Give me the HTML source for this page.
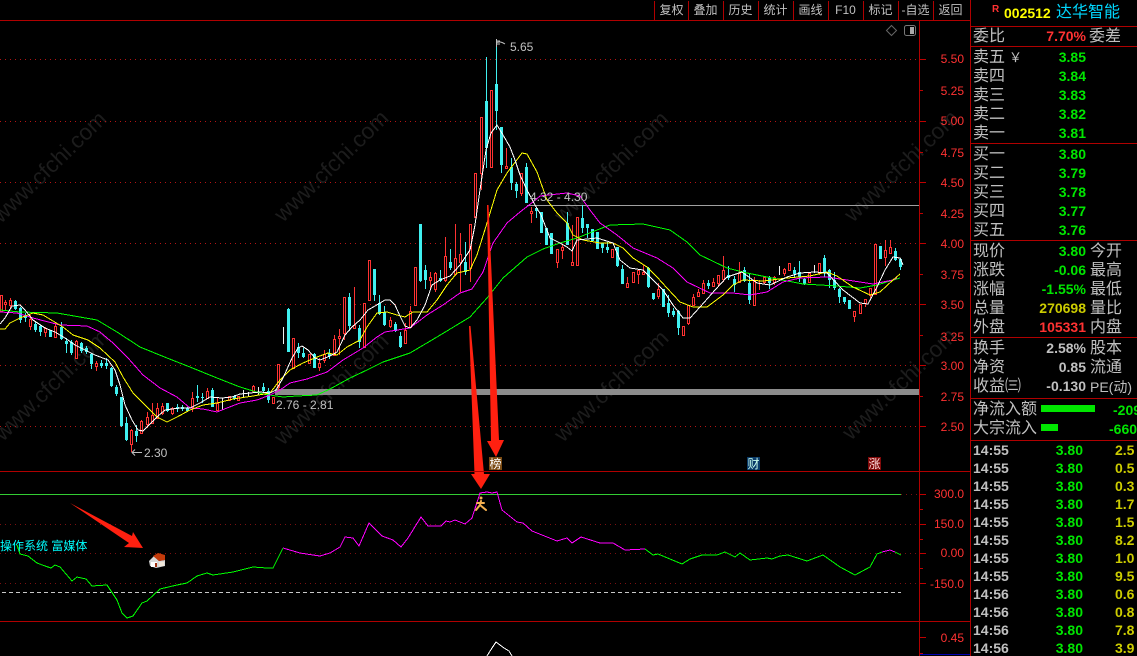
<!DOCTYPE html>
<html><head><meta charset="utf-8"><title>002512</title>
<style>
html,body{margin:0;padding:0;background:#000;width:1137px;height:656px;overflow:hidden}
#w{position:relative;width:1137px;height:656px;overflow:hidden;background:#000;font-family:"Liberation Sans","WenQuanYi Zen Hei",sans-serif}
svg{position:absolute;left:0;top:0}
.t{position:absolute;white-space:nowrap;line-height:18px;height:18px}
.l{font-size:16px;color:#c0c0c0;left:973px;margin-top:1px;font-family:"Liberation Sans","WenQuanYi Zen Hei",sans-serif}
.r{font-size:16px;color:#c0c0c0;left:1090px;margin-top:1px}
.v{font-size:14px;font-weight:bold;right:51px}
.g{color:#00e600}.y{color:#cccc00}.d{color:#ff3232}.s{color:#c0c0c0}
.a{font-size:12px;color:#ff3232;right:173px}
.b{font-size:12px;color:#c0c0c0;top:1px;text-align:center;width:35px}
.m{font-size:14px;font-weight:bold;color:#c0c0c0;left:973px}
.p{font-size:14px;font-weight:bold;color:#00e600;right:54px}
.q{font-size:14px;font-weight:bold;color:#cccc00;left:1115px}
.o{font-size:12px;color:#c0c0c0}
</style></head><body><div id="w">
<svg width="1137" height="656" viewBox="0 0 1137 656">
<g font-family="Liberation Sans" font-size="22.5" fill="#1c1c1c">
<text transform="translate(1,224) rotate(-44)">www.cfchi.com</text>
<text transform="translate(283,223) rotate(-44)">www.cfchi.com</text>
<text transform="translate(563,224) rotate(-44)">www.cfchi.com</text>
<text transform="translate(853,223) rotate(-44)">www.cfchi.com</text>
<text transform="translate(3,442) rotate(-44)">www.cfchi.com</text>
<text transform="translate(283,446) rotate(-44)">www.cfchi.com</text>
<text transform="translate(563,443) rotate(-44)">www.cfchi.com</text>
<text transform="translate(851,441) rotate(-44)">www.cfchi.com</text>
</g>
<g shape-rendering="crispEdges">
<g stroke="#b41414" stroke-dasharray="1 4" fill="none">
<path d="M0 59.5H920M0 121.5H920M0 182.5H920M0 243.5H920M0 304.5H920M0 365.5H920M0 426.5H920"/>
</g>
<g stroke="#7a1010" stroke-dasharray="1 4" fill="none">
<path d="M0 524.5H920M0 553.5H920M0 583.5H920M901 494.5H920"/>
</g>
<rect x="275" y="389" width="645" height="6" fill="#8c8c8c"/>
<path d="M527 205.5H920" stroke="#a0a0a0" fill="none"/>
<path d="M0 494.5H901" stroke="#33cc33" fill="none"/>
<path d="M2 592.5H901" stroke="#c8c8c8" stroke-dasharray="4 3" fill="none"/>
<g transform="translate(.5,0)" fill="none">
<path stroke="#40f0f0" d="M15 300V310M20 307V323M25 313V322M35 322V332M40 325V336M50 330V337M61 322V340M66 338V353M71 340V355M81 342V353M86 346V354M91 353V369M101 360V368M106 358V369M111 367V387M116 385V396M121 397V427M126 417V441M136 425V442M167 403V412M177 404V412M182 405V411M187 407V412M197 385V402M202 393V403M212 388V407M234 395V400M263 383V392M268 388V403M288 308V352M298 343V358M303 348V358M314 353V368M329 349V359M349 293V331M359 325V348M374 269V301M379 295V315M384 306V326M395 322V332M400 332V348M420 224V282M425 265V289M440 270V282M450 249V270M465 242V275M486 57V168M496 42V130M501 127V173M511 158V190M516 182V198M526 163V203M536 207V218M541 212V233M546 228V245M551 233V254M567 212V245M582 205V233M587 224V238M592 229V242M597 232V249M602 243V253M607 242V253M617 247V267M622 265V284M648 267V288M653 293V300M663 289V307M668 295V317M673 308V317M678 310V335M708 280V289M728 266V280M734 276V292M744 267V282M749 273V304M769 276V289M794 267V277M799 261V282M804 278V285M824 255V277M829 269V288M834 272V290M839 288V303M844 297V304M849 300V309M880 246V259M895 248V261M900 258V270"/>
<path stroke="#40f0f0" stroke-width="3" d="M15 301V309M20 308V320M25 315V318M35 324V330M40 326V332M50 330V337M61 327V339M66 341V344M71 342V353M81 343V351M86 348V352M91 354V364M101 363V366M106 363V366M111 368V386M116 387V394M121 397V426M126 423V440M136 431V436M167 403V411M177 407V409M182 407V409M187 408V411M197 396V398M202 397V398M212 390V407M234 396V399M263 387V391M268 391V400M288 309V352M298 347V353M303 353V357M314 354V368M329 353V356M349 297V326M359 328V342M374 269V295M379 303V314M384 312V325M395 324V331M400 336V347M420 224V281M425 270V280M440 278V281M450 262V268M465 262V272M486 101V148M496 84V111M501 127V165M511 167V183M516 184V191M526 167V203M536 208V211M541 212V233M546 228V245M551 233V254M567 223V245M582 218V228M587 224V228M592 229V241M597 232V249M602 243V248M607 247V250M617 247V266M622 269V284M648 268V287M653 293V299M663 289V307M668 303V313M673 311V315M678 311V328M708 283V286M728 275V278M734 279V285M744 270V281M749 283V300M769 277V283M794 270V274M799 272V277M804 279V284M824 258V272M829 270V280M834 280V288M839 289V297M844 297V302M849 300V309M880 246V259M895 251V260M900 259V267"/>
<path stroke="#f0f0f0" d="M222 398V410M243 390V397M248 392V397M258 387V395M283 327V344M779 266V275M814 265V273"/>
<path stroke="#ff3232" d="M1 295V311M5 300V310M10 298V308M30 315V330M45 327V337M55 322V338M76 340V358M96 361V371M131 429V452M141 420V433M147 412V428M152 403V423M157 403V419M162 403V415M172 407V415M192 392V412M207 388V398M217 398V410M229 396V400M238 396V400M253 385V392M273 397V403M278 364V390M293 338V368M309 354V363M319 358V371M324 350V363M334 335V355M339 329V355M344 297V340M354 287V328M364 303V347M369 260V300M390 317V328M405 323V344M410 306V328M415 267V306M430 272V290M435 272V292M445 237V282M455 224V274M460 233V292M470 224V282M475 173V217M481 117V190M491 90V167M506 148V168M521 173V196M531 207V223M557 249V268M562 245V259M572 225V265M577 217V265M612 249V257M627 277V288M633 272V283M638 270V284M643 265V274M658 283V299M683 326V336M688 305V325M693 294V305M698 289V297M703 280V293M713 278V287M718 275V287M723 256V282M739 262V283M754 277V306M759 280V290M764 276V284M774 276V285M784 268V276M789 263V271M809 272V283M819 263V275M854 311V322M860 304V313M865 299V307M870 288V298M875 244V294M885 240V266M890 240V254"/>
</g>
<g transform="translate(.5,.5)" fill="#000" stroke="#ff3232">
<path d="M0 295h2V311h-2zM4 302h2V304h-2zM9 300h2V305h-2zM29 319h2V326h-2zM44 328h2V332h-2zM54 326h2V337h-2zM75 341h2V358h-2zM95 363h2V366h-2zM130 430h2V444h-2zM140 421h2V433h-2zM146 417h2V424h-2zM151 415h2V423h-2zM156 408h2V418h-2zM161 406h2V413h-2zM171 408h2V413h-2zM191 398h2V407h-2zM206 391h2V398h-2zM216 403h2V410h-2zM228 396h2V400h-2zM237 396h2V400h-2zM252 386h2V391h-2zM272 397h2V403h-2zM277 364h2V387h-2zM292 338h2V368h-2zM308 354h2V363h-2zM318 363h2V367h-2zM323 354h2V360h-2zM333 339h2V355h-2zM338 336h2V338h-2zM343 297h2V333h-2zM353 325h2V328h-2zM363 303h2V347h-2zM368 260h2V300h-2zM389 320h2V326h-2zM404 330h2V343h-2zM409 311h2V327h-2zM414 267h2V305h-2zM429 277h2V280h-2zM434 273h2V289h-2zM444 256h2V280h-2zM454 258h2V274h-2zM459 254h2V262h-2zM469 224h2V268h-2zM474 173h2V217h-2zM480 117h2V173h-2zM490 90h2V167h-2zM505 166h2V168h-2zM520 173h2V193h-2zM530 211h2V213h-2zM556 249h2V262h-2zM561 247h2V250h-2zM571 262h2V265h-2zM576 217h2V265h-2zM611 249h2V257h-2zM626 283h2V287h-2zM632 272h2V282h-2zM637 270h2V274h-2zM642 272h2V274h-2zM657 289h2V296h-2zM682 326h2V335h-2zM687 305h2V323h-2zM692 297h2V305h-2zM697 292h2V296h-2zM702 283h2V293h-2zM712 282h2V286h-2zM717 275h2V283h-2zM722 270h2V279h-2zM738 273h2V282h-2zM753 281h2V305h-2zM763 277h2V282h-2zM773 277h2V282h-2zM783 269h2V273h-2zM788 263h2V270h-2zM808 273h2V282h-2zM818 263h2V273h-2zM853 311h2V316h-2zM859 304h2V313h-2zM864 299h2V303h-2zM869 288h2V295h-2zM874 244h2V294h-2zM884 250h2V257h-2zM889 247h2V253h-2z"/>
</g>
</g>
<g fill="none" stroke-width="1" stroke-linejoin="round" shape-rendering="crispEdges">
<polyline stroke="#00ff00" points="0,310 20,312 57,313 97,320 117,332 140,347 167,358 190,367 217,378 240,387 263,394 283,397 297,396 317,395 330,389 350,378 367,370 383,362 410,353 437,337 470,317 487,298 503,278 527,257 543,249 560,243 577,238 597,230 610,225 643,224 670,230 687,242 700,255 727,268 747,273 777,279 803,284 837,286 860,288 877,285 900,278"/>
<polyline stroke="#ff00ff" points="0,312 17,313 33,318 60,325 87,326 100,332 113,343 128,358 143,375 160,388 177,397 190,408 203,409 217,412 227,408 240,403 257,400 270,395 280,390 290,383 307,379 327,372 343,360 363,348 377,337 385,332 410,328 427,315 443,305 460,293 472,289 483,272 493,243 507,223 520,212 533,202 540,196 567,193 580,196 590,210 600,223 617,235 633,248 657,258 673,268 687,282 710,293 733,293 750,295 767,292 783,282 800,278 827,277 847,280 873,284 893,280 897,278"/>
<polyline stroke="#ffff00" points="0,329 5,329 10,323 20,318 33,313 43,315 53,321 63,327 73,335 88,340 100,348 115,362 123,377 133,393 143,403 157,417 167,422 177,417 190,410 203,405 217,403 233,399 253,396 270,393 280,380 290,370 303,363 317,357 328,353 337,355 347,347 360,340 367,327 377,313 387,312 397,315 405,317 413,312 427,312 437,300 447,285 457,273 470,270 477,255 487,223 497,190 507,173 522,153 527,154 537,172 547,200 557,213 567,223 573,235 583,240 600,243 613,243 623,248 633,258 647,267 657,277 667,288 680,302 693,307 707,307 723,295 733,285 743,280 763,281 787,278 810,276 827,272 837,276 853,287 870,295 880,292 893,280 900,274"/>
<polyline stroke="#ffffff" points="0,324 5,318 12,306 20,305 25,310 33,320 45,328 55,332 65,338 75,345 85,350 95,355 108,360 115,370 120,385 125,405 132,420 138,430 143,431 150,424 158,416 165,410 172,409 180,408 190,408 200,403 210,397 222,398 232,397 240,394 250,393 260,392 270,393 276,390 283,378 292,358 298,348 302,346 308,350 315,358 320,360 330,356 337,352 345,335 352,327 360,320 368,310 375,306 385,300 390,300 395,305 400,316 405,326 410,328 417,320 425,305 432,285 440,280 450,276 460,265 470,250 475,225 480,190 486,150 491,133 497,125 503,135 510,147 515,160 520,175 527,190 535,205 541,215 550,238 560,243 567,247 572,251 577,240 597,238 613,243 620,260 630,268 643,270 653,280 663,290 673,305 683,318 690,318 700,307 708,298 715,290 727,277 742,272 757,283 770,285 787,277 800,273 815,272 827,273 843,290 860,303 868,304 877,287 885,270 893,257 900,258 903,265"/>
<polyline stroke="#00ff00" points="17,545 20,554 28,556 37,563 45,566 51,568 55,565 60,567 72,581 77,577 86,579 92,586 107,585 117,600 122,613 127,618 133,616 142,603 147,601 160,589 177,585 187,583 197,576 207,573 213,575 233,572 253,567 267,568 273,568 283,548"/>
<polyline stroke="#ff00ff" points="283,548 300,553 313,555 320,556 330,553 340,547 345,537 353,538 359,546 369,523 382,536 393,540 401,547 408,538 421,517 428,526 441,526 446,521 450,522 455,520 460,522 465,524 472,518 480,493 487,492 492,493 497,492 502,510 517,522 523,523 532,531 557,541 567,538 572,543 581,537 600,543 613,543 625,550 645,549"/>
<polyline stroke="#00ff00" points="645,549 653,555 658,554 682,564 690,559 702,555 717,555 725,552 735,557 740,553 750,560 767,558 772,559 780,556 788,555 807,561 823,555 840,567 855,575 870,567 877,554 882,552"/>
<polyline stroke="#ff00ff" points="882,552 890,550 895,552"/>
<polyline stroke="#00ff00" points="895,552 901,555"/>
<polyline stroke="#ffffff" points="487,656 492,648 496,642 504,648 509,651 512,656"/>
</g>
<g fill="none" stroke="#c0c0c0">
<path d="M496 42.5C499 42 500 41 505 44M496.5 39V47M497 41h3M497 44h3"/>
<path d="M142 452.5H132M135 449.5L132 452.5L135 455.5"/>
</g>
<polygon fill="#ff2010" points="487,205 488.5,205 499,440 504,440 496,457 487,441 491,441"/>
<polygon fill="#ff2010" points="469,326 470.5,326 484,474 490,474 481,489 471,474 474.5,474"/>
<polygon fill="#ff2010" points="70,503 132,536 133,532 143,548 124,547 129,543"/>
<g>
<polygon fill="#d8d8d8" points="149,561 154,556 159,561 165,560 165,566 156,568 150,566"/>
<polygon fill="#c33a0a" points="153,556 158,553 165,555 165,560 159,561"/>
<rect x="151" y="562" width="6" height="5" fill="#ffffff"/>
<rect x="155" y="563" width="2" height="4" fill="#a03010"/>
<rect x="159" y="562" width="5" height="4" fill="#efe7da"/>
</g>
<g stroke="#f5b050" stroke-width="2" fill="none" stroke-linecap="round">
<circle cx="481" cy="498" r="1.5" fill="#f5b050" stroke="none"/>
<path d="M481 501L480 505L476 510M480 505L486 510M477 503L484 503" />
</g>
<rect x="489" y="457" width="13" height="13" fill="#7a4a12"/>
<rect x="747" y="457" width="13" height="13" fill="#0a3a68"/>
<rect x="868" y="457" width="13" height="13" fill="#800808"/>
<g shape-rendering="crispEdges" fill="none">
<path stroke="#b00000" d="M0 20.5H970M919.5 20V656M970.5 0V656M654.5 1V20M688.5 1V20M723.5 1V20M758.5 1V20M793.5 1V20M828.5 1V20M863.5 1V20M898.5 1V20M933.5 1V20M0 471.5H970M0 621.5H970M970 26.5H1137M970 46.5H1137M970 143.5H1137M970 240.5H1137M970 337.5H1137M970 398.5H1137M970 440.5H1137"/>
<path stroke="#c00000" d="M920 59.5h6M920 90.5h3M920 121.5h6M920 152.5h3M920 182.5h6M920 213.5h3M920 243.5h6M920 274.5h3M920 304.5h6M920 335.5h3M920 365.5h6M920 396.5h3M920 426.5h6M920 494.5h6M920 509.5h3M920 524.5h6M920 539.5h3M920 553.5h6M920 568.5h3M920 583.5h6M920 637.5h6M920 653.5h3"/>
<path stroke="#0000b0" d="M920 654.5H970"/>
</g>
<rect x="1041" y="405" width="54" height="7" fill="#00e600"/>
<rect x="1041" y="424" width="17" height="7" fill="#00e600"/>
<polygon points="891.5,25.5 896.5,30.5 891.5,35.5 886.5,30.5" fill="none" stroke="#666"/>
<rect x="904.5" y="25.5" width="11" height="10" rx="2" fill="none" stroke="#777"/>
<rect x="910" y="27" width="4" height="7" fill="#aaa"/>
</svg>

<div class="t b" style="left:654px">复权</div>
<div class="t b" style="left:688px">叠加</div>
<div class="t b" style="left:723px">历史</div>
<div class="t b" style="left:758px">统计</div>
<div class="t b" style="left:793px">画线</div>
<div class="t b" style="left:828px">F10</div>
<div class="t b" style="left:863px">标记</div>
<div class="t b" style="left:898px">-自选</div>
<div class="t b" style="left:933px">返回</div>

<div class="t a" style="top:50px">5.50</div><div class="t a" style="top:82px">5.25</div><div class="t a" style="top:112px">5.00</div><div class="t a" style="top:144px">4.75</div><div class="t a" style="top:174px">4.50</div><div class="t a" style="top:205px">4.25</div><div class="t a" style="top:235px">4.00</div><div class="t a" style="top:266px">3.75</div><div class="t a" style="top:296px">3.50</div><div class="t a" style="top:328px">3.25</div><div class="t a" style="top:357px">3.00</div><div class="t a" style="top:388px">2.75</div><div class="t a" style="top:418px">2.50</div>
<div class="t a" style="top:485px">300.0</div><div class="t a" style="top:515px">150.0</div><div class="t a" style="top:544px">0.00</div><div class="t a" style="top:575px">-150.0</div><div class="t a" style="top:629px">0.45</div>

<div class="t o" style="left:510px;top:38px">5.65</div>
<div class="t o" style="left:144px;top:444px">2.30</div>
<div class="t o" style="left:276px;top:396px">2.76 - 2.81</div>
<div class="t o" style="left:530px;top:188px">4.32 - 4.30</div>
<div class="t" style="left:0;top:537px;font-size:12px;color:#00ffff">操作系统 富媒体</div>
<div class="t" style="left:489px;top:455px;width:13px;text-align:center;font-size:12px;color:#fff">榜</div>
<div class="t" style="left:747px;top:455px;width:13px;text-align:center;font-size:12px;color:#cfe">财</div>
<div class="t" style="left:868px;top:455px;width:13px;text-align:center;font-size:12px;color:#fdd">涨</div>

<div class="t" style="left:992px;top:1px;font-size:10px;font-weight:bold;color:#ff3232">R</div>
<div class="t" style="left:1004px;top:4px;font-size:14px;font-weight:bold;color:#ffff00">002512</div>
<div class="t" style="left:1056px;top:4px;font-size:16px;color:#00d8ff">达华智能</div>

<div class="t l" style="top:27px">委比</div><div class="t v d" style="top:27px">7.70%</div><div class="t r" style="top:27px;left:1089px">委差</div>
<div class="t l" style="top:48px">卖五<span style="font-size:13px;margin-left:4px">￥</span></div><div class="t v g" style="top:48px">3.85</div>
<div class="t l" style="top:67px">卖四</div><div class="t v g" style="top:67px">3.84</div>
<div class="t l" style="top:86px">卖三</div><div class="t v g" style="top:86px">3.83</div>
<div class="t l" style="top:105px">卖二</div><div class="t v g" style="top:105px">3.82</div>
<div class="t l" style="top:124px">卖一</div><div class="t v g" style="top:124px">3.81</div>
<div class="t l" style="top:145px">买一</div><div class="t v g" style="top:145px">3.80</div>
<div class="t l" style="top:164px">买二</div><div class="t v g" style="top:164px">3.79</div>
<div class="t l" style="top:183px">买三</div><div class="t v g" style="top:183px">3.78</div>
<div class="t l" style="top:202px">买四</div><div class="t v g" style="top:202px">3.77</div>
<div class="t l" style="top:221px">买五</div><div class="t v g" style="top:221px">3.76</div>
<div class="t l" style="top:242px">现价</div><div class="t v g" style="top:242px">3.80</div><div class="t r" style="top:242px">今开</div>
<div class="t l" style="top:261px">涨跌</div><div class="t v g" style="top:261px">-0.06</div><div class="t r" style="top:261px">最高</div>
<div class="t l" style="top:280px">涨幅</div><div class="t v g" style="top:280px">-1.55%</div><div class="t r" style="top:280px">最低</div>
<div class="t l" style="top:299px">总量</div><div class="t v y" style="top:299px">270698</div><div class="t r" style="top:299px">量比</div>
<div class="t l" style="top:318px">外盘</div><div class="t v d" style="top:318px">105331</div><div class="t r" style="top:318px">内盘</div>
<div class="t l" style="top:339px">换手</div><div class="t v s" style="top:339px">2.58%</div><div class="t r" style="top:339px">股本</div>
<div class="t l" style="top:358px">净资</div><div class="t v s" style="top:358px">0.85</div><div class="t r" style="top:358px">流通</div>
<div class="t l" style="top:377px">收益㈢</div><div class="t v s" style="top:377px">-0.130</div><div class="t r" style="top:377px;font-size:14px">PE(动)</div>
<div class="t l" style="top:400px">净流入额</div><div class="t" style="left:1113px;top:401px;font-size:14px;font-weight:bold;color:#00e600">-209</div>
<div class="t l" style="top:419px">大宗流入</div><div class="t" style="left:1109px;top:420px;font-size:14px;font-weight:bold;color:#00e600">-660</div>

<div class="t m" style="top:441px">14:55</div><div class="t p" style="top:441px">3.80</div><div class="t q" style="top:441px">2.5</div>
<div class="t m" style="top:459px">14:55</div><div class="t p" style="top:459px">3.80</div><div class="t q" style="top:459px">0.5</div>
<div class="t m" style="top:477px">14:55</div><div class="t p" style="top:477px">3.80</div><div class="t q" style="top:477px">0.3</div>
<div class="t m" style="top:495px">14:55</div><div class="t p" style="top:495px">3.80</div><div class="t q" style="top:495px">1.7</div>
<div class="t m" style="top:513px">14:55</div><div class="t p" style="top:513px">3.80</div><div class="t q" style="top:513px">1.5</div>
<div class="t m" style="top:531px">14:55</div><div class="t p" style="top:531px">3.80</div><div class="t q" style="top:531px">8.2</div>
<div class="t m" style="top:549px">14:55</div><div class="t p" style="top:549px">3.80</div><div class="t q" style="top:549px">1.0</div>
<div class="t m" style="top:567px">14:55</div><div class="t p" style="top:567px">3.80</div><div class="t q" style="top:567px">9.5</div>
<div class="t m" style="top:585px">14:56</div><div class="t p" style="top:585px">3.80</div><div class="t q" style="top:585px">0.6</div>
<div class="t m" style="top:603px">14:56</div><div class="t p" style="top:603px">3.80</div><div class="t q" style="top:603px">0.8</div>
<div class="t m" style="top:621px">14:56</div><div class="t p" style="top:621px">3.80</div><div class="t q" style="top:621px">7.8</div>
<div class="t m" style="top:639px">14:56</div><div class="t p" style="top:639px">3.80</div><div class="t q" style="top:639px">3.9</div>
</div></body></html>
